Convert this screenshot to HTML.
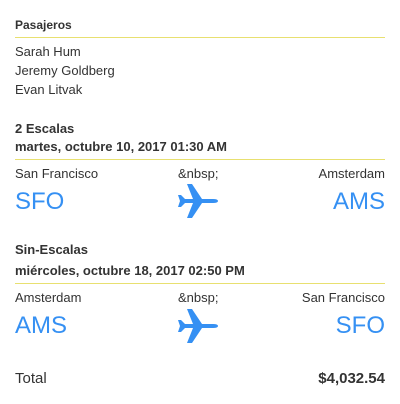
<!DOCTYPE html>
<html><head><style>
body{margin:0;width:400px;height:404px;background:#fff;font-family:"Liberation Sans",sans-serif;color:#333;position:relative;overflow:hidden}
.a{position:absolute;white-space:nowrap;line-height:1}
.b{font-weight:bold}
.l{position:absolute;left:15px;width:370px;height:1px;background:#e8e070}
.blue{color:#3590f3;font-size:24px}
.r{right:15px}
</style></head><body>
<div class="a b" style="left:15px;top:19px;font-size:12px">Pasajeros</div>
<div class="l" style="top:37px"></div>
<div class="a" style="left:15px;top:45px;font-size:13px">Sarah Hum</div>
<div class="a" style="left:15px;top:64px;font-size:13px">Jeremy Goldberg</div>
<div class="a" style="left:15px;top:83px;font-size:13px">Evan Litvak</div>

<div class="a b" style="left:15px;top:122px;font-size:13px">2 Escalas</div>
<div class="a b" style="left:15px;top:140px;font-size:13px">martes, octubre 10, 2017 01:30 AM</div>
<div class="l" style="top:159px"></div>
<div class="a" style="left:15px;top:167px;font-size:13px">San Francisco</div>
<div class="a" style="left:178px;top:167px;font-size:13px">&amp;nbsp;</div>
<div class="a r" style="top:167px;font-size:13px">Amsterdam</div>
<div class="a blue" style="left:15px;top:190px">SFO</div>
<div class="a blue r" style="top:190px">AMS</div>
<svg class="a" style="left:177px;top:183px" width="42" height="36" viewBox="0 0 42 36"><path fill="#3590f3" d="M1 12 L4 12 L8 16 L16 16 L10 1 L15 1 L25 16 L36 16 Q41 16 41 18 Q41 20 36 20 L25 20 L15 35 L10 35 L16 20 L8 20 L4 24 L1 24 L3 18 Z"/></svg>

<div class="a b" style="left:15px;top:243px;font-size:13px">Sin-Escalas</div>
<div class="a b" style="left:15px;top:264px;font-size:13px">miércoles, octubre 18, 2017 02:50 PM</div>
<div class="l" style="top:283px"></div>
<div class="a" style="left:15px;top:291px;font-size:13px">Amsterdam</div>
<div class="a" style="left:178px;top:291px;font-size:13px">&amp;nbsp;</div>
<div class="a r" style="top:291px;font-size:13px">San Francisco</div>
<div class="a blue" style="left:15px;top:314px">AMS</div>
<div class="a blue r" style="top:314px">SFO</div>
<svg class="a" style="left:177px;top:308px" width="42" height="36" viewBox="0 0 42 36"><path fill="#3590f3" d="M1 12 L4 12 L8 16 L16 16 L10 1 L15 1 L25 16 L36 16 Q41 16 41 18 Q41 20 36 20 L25 20 L15 35 L10 35 L16 20 L8 20 L4 24 L1 24 L3 18 Z"/></svg>

<div class="a" style="left:15px;top:371px;font-size:15px">Total</div>
<div class="a b r" style="top:371px;font-size:15px">$4,032.54</div>
</body></html>
